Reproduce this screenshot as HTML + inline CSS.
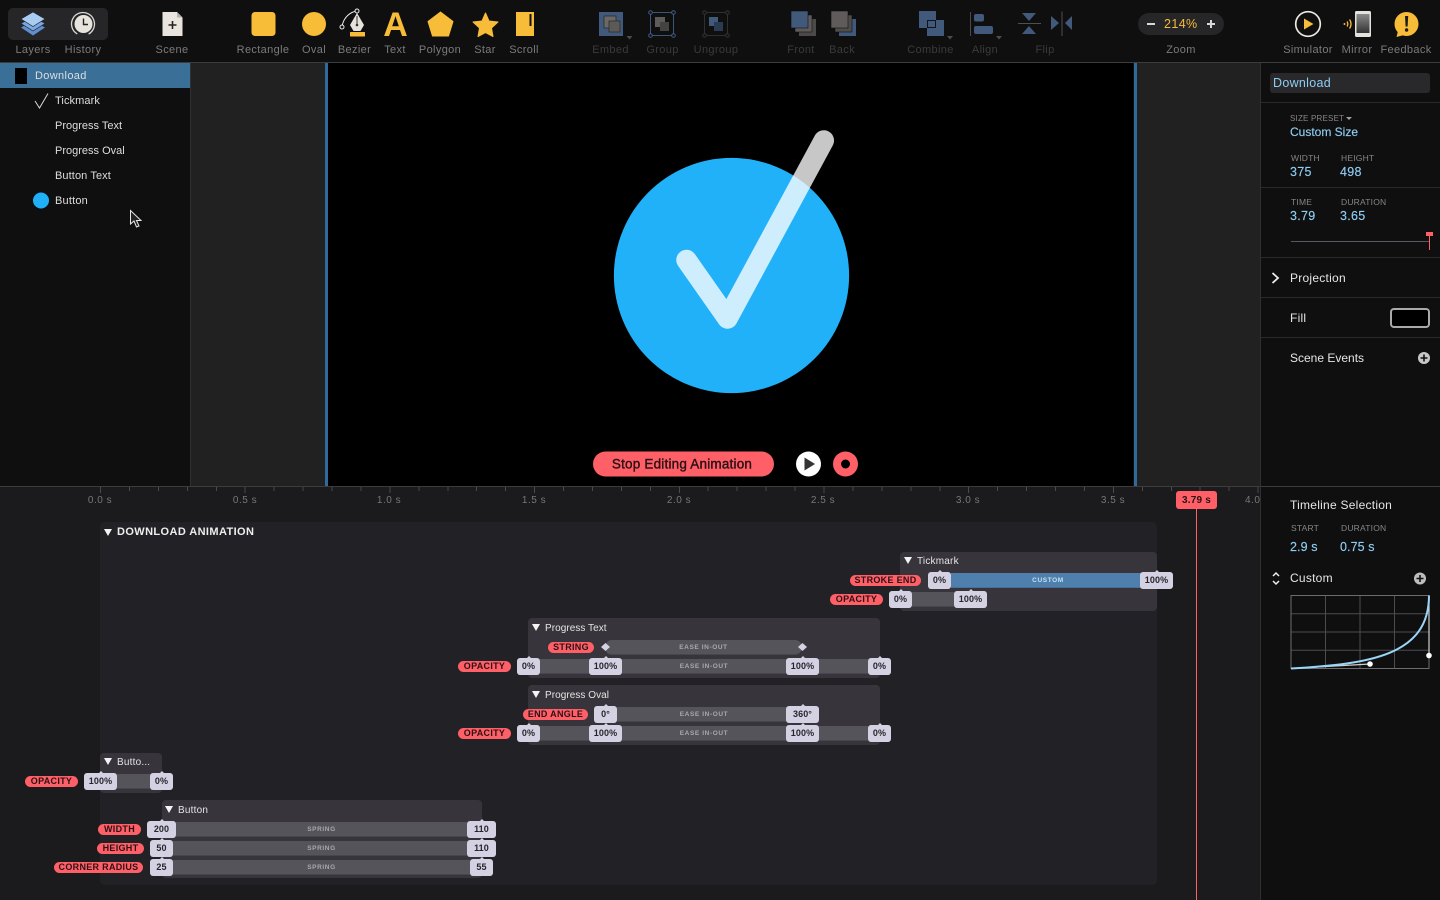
<!DOCTYPE html>
<html><head><meta charset="utf-8"><title>Animation Editor</title>
<style>
*{box-sizing:border-box}
html,body{margin:0;padding:0;width:1440px;height:900px;overflow:hidden;background:#0f0f10;font-family:"Liberation Sans",sans-serif}
.a{position:absolute}
.t{position:absolute;white-space:nowrap;line-height:14px;height:14px}
.tb{color:#7b7b7d;font-size:11px;top:43px;letter-spacing:.35px;transform:translateX(-50%)}
.tb.d{color:#3b3b3c}
.ly{color:#dedede;font-size:11px;letter-spacing:0}
.cap{color:#868688;font-size:8.5px;letter-spacing:.2px}
.val{color:#8fcdf2;font-size:12.5px;letter-spacing:.3px;-webkit-text-stroke:.15px #8fcdf2}
.wh{color:#e6e6e6;font-size:12px;letter-spacing:.25px}
.tk{color:#77777a;font-size:10px;top:494px;letter-spacing:.5px;transform:translateX(-50%)}
.g{position:absolute;background:#37353b;border-radius:4px}
.gt{position:absolute;color:#e4e4e4;font-size:10px;line-height:14px;letter-spacing:.05px;white-space:nowrap;margin-top:2px}
.tri{position:absolute;width:0;height:0;border-left:4px solid transparent;border-right:4px solid transparent;border-top:7px solid #f4f4f4}
.b{position:absolute;height:15px;background:#55545b;border-bottom:1px solid #47464d;color:#a9a8ae;font-size:6.5px;font-weight:bold;letter-spacing:.6px;text-align:center;line-height:15px}
.c{position:absolute;height:17px;background:#d4d1e2;color:#26252c;border-radius:3px;font-size:9px;font-weight:bold;text-align:center;line-height:17px;letter-spacing:.1px}
.c:before{content:"";position:absolute;left:50%;top:-2px;margin-left:-2px;border-left:2px solid transparent;border-right:2px solid transparent;border-bottom:2px solid #d4d1e2}
.l{position:absolute;height:11px;background:#ff5f66;color:#2b1116;border-radius:6px;font-size:9px;font-weight:bold;text-align:center;line-height:11px;letter-spacing:.3px;white-space:nowrap}
svg{position:absolute;overflow:visible}
</style></head><body>

<!-- toolbar -->
<div class="a" style="left:0;top:0;width:1440px;height:62px;background:#0f0f10"></div>
<div class="a" style="left:0;top:62px;width:1440px;height:1px;background:#3c3c3e"></div>
<div class="a" style="left:8px;top:8px;width:100px;height:32px;background:#262628;border-radius:5px"></div>

<svg style="left:0;top:0" width="1440" height="62" viewBox="0 0 1440 62">
 <!-- layers -->
 <path d="M33 21 L45 27.5 L33 35.5 L21 27.5Z" fill="#5f8fd0"/>
 <path d="M33 17 L45 23.5 L33 31 L21 23.5Z" fill="#7ba8e0" stroke="#262628" stroke-width=".7"/>
 <path d="M33 12 L45 19 L33 26.5 L21 19Z" fill="#a9cdf2" stroke="#262628" stroke-width=".7"/>
 <!-- history -->
 <circle cx="83" cy="24" r="11.5" fill="none" stroke="#dad6cf" stroke-width="1.3" stroke-dasharray="60 12" transform="rotate(120 83 24)"/>
 <circle cx="83.5" cy="24" r="9" fill="#e8e4dd"/>
 <path d="M83.5 18.5V24.5H88" fill="none" stroke="#222" stroke-width="1.4"/>
 <!-- scene -->
 <path d="M162.5 12H177L182.5 17.5V36H162.5Z" fill="#e9e5de"/><path d="M177 12V17.5H182.5Z" fill="#b5b1aa"/>
 <path d="M172.5 21V29M168.5 25H176.5" stroke="#222" stroke-width="1.6"/>
 <!-- rectangle -->
 <rect x="251.5" y="12" width="24" height="24" rx="3.5" fill="#f7bc38"/>
 <circle cx="314" cy="24" r="12" fill="#f7bc38"/>
 <!-- bezier -->
 <path d="M342 26 C344 17 350 12 357 11" fill="none" stroke="#eee" stroke-width="1"/>
 <circle cx="342" cy="27" r="2" fill="#111" stroke="#eee" stroke-width="1"/>
 <circle cx="357" cy="11" r="2" fill="#111" stroke="#eee" stroke-width="1"/>
 <path d="M357 13 L364 25 L360.5 31 H353.5 L350 25Z" fill="#e7e3dc"/>
 <path d="M357 16V25" stroke="#333" stroke-width="1"/><circle cx="357" cy="25" r="1.3" fill="#333"/>
 <rect x="350" y="32" width="15" height="4.5" rx=".5" fill="#f7bc38"/>
 <text x="395.5" y="36" text-anchor="middle" font-family="Liberation Sans" font-weight="bold" font-size="34" fill="#f7bc38">A</text>
 <path d="M440.5 12 L453 21.5 L448.5 36 H432.5 L428 21.5Z" fill="#f7bc38" stroke="#f7bc38" stroke-linejoin="round"/>
 <path d="M485.5 13 L489 21 L498 22 L491.5 28 L493 36.5 L485.5 32.5 L478 36.5 L479.5 28 L473 22 L482 21Z" fill="#f7bc38" stroke="#f7bc38" stroke-linejoin="round"/>
 <rect x="516" y="12" width="18" height="24" fill="#f7bc38"/><rect x="529.5" y="14" width="2" height="12" fill="#111"/>

 <!-- embed -->
 <rect x="599" y="12" width="24" height="24" fill="#41597b"/>
 <rect x="604" y="16" width="12" height="12" fill="#6b6867" stroke="#2c2c2c" stroke-width=".8"/>
 <rect x="609" y="21" width="11" height="11" fill="#5c5a59" stroke="#2c2c2c" stroke-width=".8"/>
 <path d="M626.5 36h6l-3 3.5z" fill="#4d4d4d"/>
 <!-- group -->
 <rect x="650.5" y="12.5" width="23" height="23" fill="none" stroke="#3c5678"/>
 <g fill="#0f0f10" stroke="#3f5d85"><circle cx="650.5" cy="12.5" r="1.8"/><circle cx="673.5" cy="12.5" r="1.8"/><circle cx="650.5" cy="35.5" r="1.8"/><circle cx="673.5" cy="35.5" r="1.8"/></g>
 <rect x="655" y="17" width="10" height="10" fill="#5e5b5a"/><rect x="660" y="22" width="9" height="9" fill="#454342"/>
 <!-- ungroup -->
 <rect x="704.5" y="12.5" width="23" height="23" fill="none" stroke="#2f2f2f"/>
 <g fill="#0f0f10" stroke="#333"><circle cx="704.5" cy="12.5" r="1.8"/><circle cx="727.5" cy="12.5" r="1.8"/><circle cx="704.5" cy="35.5" r="1.8"/><circle cx="727.5" cy="35.5" r="1.8"/></g>
 <rect x="709" y="17" width="9" height="9" fill="#41597b"/><rect x="714" y="22" width="9" height="9" fill="#2b3b52"/>
 <!-- front -->
 <rect x="799" y="19" width="17" height="17" fill="#4c4a49"/><rect x="795" y="15" width="17" height="17" fill="#5e5b5a" stroke="#0f0f10" stroke-width=".6"/>
 <rect x="791" y="11" width="17" height="17" fill="#41597b" stroke="#0f0f10" stroke-width=".6"/>
 <!-- back -->
 <rect x="839" y="19" width="17" height="17" fill="#41597b"/><rect x="835" y="15" width="17" height="17" fill="#4f4d4c" stroke="#0f0f10" stroke-width=".6"/>
 <rect x="831" y="11" width="17" height="17" fill="#5e5b5a" stroke="#0f0f10" stroke-width=".6"/>
 <!-- combine -->
 <rect x="919" y="11" width="17" height="17" fill="#41597b"/><rect x="927" y="20" width="17" height="16" fill="#41597b"/>
 <rect x="927.5" y="20.5" width="8" height="7" fill="#41597b" stroke="#141414"/>
 <path d="M947 36h6l-3 3.5z" fill="#4d4d4d"/>
 <!-- align -->
 <path d="M970.5 12V36" stroke="#4a4a4a"/>
 <rect x="974" y="14" width="10" height="7.5" rx="2" fill="#41597b"/><rect x="974" y="26" width="19" height="8" rx="2" fill="#41597b"/>
 <path d="M996 36h6l-3 3.5z" fill="#4d4d4d"/>
 <!-- flip -->
 <path d="M1022 13H1036L1029 21Z" fill="#41597b"/><path d="M1018 23.5H1041" stroke="#4f4f4f"/><path d="M1022 34H1036L1029 26Z" fill="#41597b"/>
 <path d="M1051 16V30L1059 23Z" fill="#41597b"/><path d="M1062 11.5V36" stroke="#4f4f4f"/><path d="M1072 16V30L1065 23Z" fill="#41597b"/>

 <!-- simulator -->
 <circle cx="1308" cy="24" r="12.3" fill="none" stroke="#ece8df" stroke-width="1.7"/>
 <path d="M1304 18.5V29.5L1313.5 24Z" fill="#f7bc38"/>
 <!-- mirror -->
 <defs><linearGradient id="scr" x1="0" y1="0" x2="0" y2="1"><stop offset="0" stop-color="#8a8a8a"/><stop offset="1" stop-color="#333"/></linearGradient></defs>
 <rect x="1355" y="11" width="16" height="26" rx="1.5" fill="#e4e2dc"/>
 <rect x="1356.5" y="14" width="13" height="19" fill="url(#scr)"/>
 <path d="M1349.5 19.5C1351.5 22 1351.5 26 1349.5 28.5M1347 21.5C1348 23 1348 25 1347 26.5" fill="none" stroke="#f7bc38" stroke-width="1.3"/>
 <circle cx="1344.5" cy="24" r="1" fill="#f7bc38"/>
 <!-- feedback -->
 <circle cx="1406.5" cy="24" r="12" fill="#f7bc38"/><path d="M1398 31L1396.5 37L1404 35Z" fill="#f7bc38"/>
 <path d="M1405 16H1408.2L1407.6 26.5H1405.6Z" fill="#1c1c1c"/><circle cx="1406.6" cy="30" r="1.7" fill="#1c1c1c"/>
</svg>

<div class="t tb" style="left:33px">Layers</div>
<div class="t tb" style="left:83px">History</div>
<div class="t tb" style="left:172px">Scene</div>
<div class="t tb" style="left:263px">Rectangle</div>
<div class="t tb" style="left:314px">Oval</div>
<div class="t tb" style="left:354.5px">Bezier</div>
<div class="t tb" style="left:395px">Text</div>
<div class="t tb" style="left:440px">Polygon</div>
<div class="t tb" style="left:485px">Star</div>
<div class="t tb" style="left:524px">Scroll</div>
<div class="t tb d" style="left:610.5px">Embed</div>
<div class="t tb d" style="left:662.5px">Group</div>
<div class="t tb d" style="left:716px">Ungroup</div>
<div class="t tb d" style="left:801px">Front</div>
<div class="t tb d" style="left:842px">Back</div>
<div class="t tb d" style="left:930.5px">Combine</div>
<div class="t tb d" style="left:985px">Align</div>
<div class="t tb d" style="left:1045px">Flip</div>
<div class="t tb" style="left:1181px">Zoom</div>
<div class="t tb" style="left:1308px">Simulator</div>
<div class="t tb" style="left:1357px">Mirror</div>
<div class="t tb" style="left:1406px">Feedback</div>

<div class="a" style="left:1138px;top:13px;width:86px;height:22px;border-radius:11px;background:#262628"></div>
<div class="a" style="left:1147px;top:23px;width:8px;height:2px;background:#d8d8d8"></div>
<div class="a" style="left:1207px;top:23px;width:8px;height:2px;background:#d8d8d8"></div>
<div class="a" style="left:1210px;top:20px;width:2px;height:8px;background:#d8d8d8"></div>
<div class="t" style="left:1164px;top:17px;color:#f7bc38;font-size:12.5px;letter-spacing:.4px">214%</div>

<!-- left panel -->
<div class="a" style="left:0;top:63px;width:190px;height:424px;background:#0f0f10"></div>
<div class="a" style="left:190px;top:63px;width:1px;height:424px;background:#303032"></div>
<div class="a" style="left:0;top:63px;width:190px;height:25px;background:#3a6f98"></div>
<div class="a" style="left:15px;top:68px;width:12px;height:16px;background:#000"></div>
<div class="t ly" style="left:35px;top:69px;letter-spacing:.35px">Download</div>
<div class="t ly" style="left:55px;top:94px;letter-spacing:.1px">Tickmark</div>
<div class="t ly" style="left:55px;top:119px">Progress Text</div>
<div class="t ly" style="left:55px;top:144px">Progress Oval</div>
<div class="t ly" style="left:55px;top:169px;letter-spacing:.1px">Button Text</div>
<div class="t ly" style="left:55px;top:194px;letter-spacing:.2px">Button</div>
<svg style="left:0;top:63px" width="190" height="170" viewBox="0 63 190 170">
 <path d="M35 101L39.5 108L48 93.5" fill="none" stroke="#d8d8d8" stroke-width="1"/>
 <circle cx="41" cy="200.5" r="8" fill="#1fb0f8"/>
 <path d="M130.5 210.5V224L134 221L136.5 227L139 226L136.5 220.5H141Z" fill="#222" stroke="#e8e8e8" stroke-width="1"/>
</svg>

<!-- canvas -->
<div class="a" style="left:191px;top:63px;width:1069px;height:423px;background:#212121"></div>
<div class="a" style="left:328px;top:63px;width:805px;height:423px;background:#000"></div>
<div class="a" style="left:325px;top:63px;width:3px;height:423px;background:#2f6a9a"></div>
<div class="a" style="left:1133px;top:63px;width:1px;height:423px;background:#111"></div>
<div class="a" style="left:1134px;top:63px;width:3px;height:423px;background:#2f6a9a"></div>
<svg style="left:328px;top:63px" width="805" height="423" viewBox="328 63 805 423">
 <circle cx="731.5" cy="275.5" r="117.6" fill="#20b1f8"/>
 <path d="M686.5 260L727.5 318.5L823.8 140.5" fill="none" stroke="#fff" stroke-opacity=".78" stroke-width="20.5" stroke-linecap="round" stroke-linejoin="round"/>
 <rect x="593" y="451.5" width="181" height="25" rx="12.5" fill="#ff5f66"/>
 <text x="682" y="468.5" text-anchor="middle" font-family="Liberation Sans" font-size="13.5" fill="#2b1116" letter-spacing=".2" stroke="#2b1116" stroke-width=".4">Stop Editing Animation</text>
 <circle cx="808.5" cy="464" r="12.5" fill="#fff"/><path d="M804.5 457.5V470.5L815 464Z" fill="#333"/>
 <circle cx="845.5" cy="464" r="12.5" fill="#ff5f66"/><circle cx="845.5" cy="464" r="4.5" fill="#000"/>
</svg>

<!-- timeline -->
<div class="a" style="left:0;top:486px;width:1260px;height:414px;background:#1b1b1d"></div>
<div class="a" style="left:0;top:486px;width:1440px;height:1px;background:#3c3c3e"></div>
<div class="a" style="left:100px;top:487px;width:1160px;height:4px;background:repeating-linear-gradient(90deg,#4a4a4c 0,#4a4a4c 1px,transparent 1px,transparent 28.94px)"></div>
<div class="a" style="left:100px;top:487px;width:1160px;height:6px;background:repeating-linear-gradient(90deg,#4a4a4c 0,#4a4a4c 1px,transparent 1px,transparent 144.7px)"></div>
<div class="t tk" style="left:100px">0.0 s</div>
<div class="t tk" style="left:245px">0.5 s</div>
<div class="t tk" style="left:389px">1.0 s</div>
<div class="t tk" style="left:534px">1.5 s</div>
<div class="t tk" style="left:679px">2.0 s</div>
<div class="t tk" style="left:823px">2.5 s</div>
<div class="t tk" style="left:968px">3.0 s</div>
<div class="t tk" style="left:1113px">3.5 s</div>
<div class="t" style="left:1245px;top:494px;color:#77777a;font-size:10px;letter-spacing:.5px">4.0</div>

<div class="a" style="left:100px;top:522px;width:1057px;height:363px;background:#222125;border-radius:5px"></div>
<div class="tri" style="left:104px;top:529px"></div>
<div class="t" style="left:117px;top:525px;color:#eee;font-size:11px;font-weight:bold;letter-spacing:.4px">DOWNLOAD ANIMATION</div>

<!-- Tickmark -->
<div class="g" style="left:900px;top:552px;width:257px;height:59px"></div>
<div class="tri" style="left:904px;top:557px"></div>
<div class="gt" style="left:917px;top:553px;letter-spacing:.2px">Tickmark</div>
<div class="b" style="left:951px;top:572.5px;width:194px;background:#4f7fac;border-bottom-color:#44709a;color:#c6e0f3">CUSTOM</div>
<div class="l" style="left:850px;top:574.5px;width:71px">STROKE END</div>
<div class="c" style="left:928px;top:571.5px;width:23px">0%</div>
<div class="c" style="left:1140px;top:571.5px;width:33px">100%</div>
<div class="b" style="left:912px;top:591.5px;width:42px"></div>
<div class="l" style="left:830px;top:593.5px;width:53px">OPACITY</div>
<div class="c" style="left:889px;top:590.5px;width:23px">0%</div>
<div class="c" style="left:954px;top:590.5px;width:33px">100%</div>

<!-- Progress Text -->
<div class="g" style="left:528px;top:618px;width:352px;height:60px"></div>
<div class="tri" style="left:532px;top:624px"></div>
<div class="gt" style="left:545px;top:620px">Progress Text</div>
<div class="l" style="left:548px;top:641.5px;width:46px">STRING</div>
<div class="b" style="left:605px;top:639.5px;width:197px;border-radius:7px">EASE IN-OUT</div>
<svg style="left:600px;top:642px" width="210" height="10"><path d="M5.5 1L10 5L5.5 9L1 5Z M202.5 1L207 5L202.5 9L198 5Z" fill="#d4d1e2"/></svg>
<div class="b" style="left:540px;top:658.5px;width:328px">EASE IN-OUT</div>
<div class="l" style="left:458px;top:660.5px;width:53px">OPACITY</div>
<div class="c" style="left:517px;top:657.5px;width:23px">0%</div>
<div class="c" style="left:589px;top:657.5px;width:33px">100%</div>
<div class="c" style="left:786px;top:657.5px;width:33px">100%</div>
<div class="c" style="left:868px;top:657.5px;width:23px">0%</div>

<!-- Progress Oval -->
<div class="g" style="left:528px;top:685px;width:352px;height:60px"></div>
<div class="tri" style="left:532px;top:691px"></div>
<div class="gt" style="left:545px;top:687px">Progress Oval</div>
<div class="b" style="left:617px;top:706.5px;width:174px">EASE IN-OUT</div>
<div class="l" style="left:523px;top:708.5px;width:65px">END ANGLE</div>
<div class="c" style="left:594px;top:705.5px;width:23px">0°</div>
<div class="c" style="left:786px;top:705.5px;width:33px">360°</div>
<div class="b" style="left:540px;top:725.5px;width:328px">EASE IN-OUT</div>
<div class="l" style="left:458px;top:727.5px;width:53px">OPACITY</div>
<div class="c" style="left:517px;top:724.5px;width:23px">0%</div>
<div class="c" style="left:589px;top:724.5px;width:33px">100%</div>
<div class="c" style="left:786px;top:724.5px;width:33px">100%</div>
<div class="c" style="left:868px;top:724.5px;width:23px">0%</div>

<!-- Butto... -->
<div class="g" style="left:100px;top:753px;width:62px;height:40px"></div>
<div class="tri" style="left:104px;top:758px"></div>
<div class="gt" style="left:117px;top:754px;letter-spacing:.2px">Butto...</div>
<div class="b" style="left:117px;top:773.5px;width:33px"></div>
<div class="l" style="left:25px;top:775.5px;width:53px">OPACITY</div>
<div class="c" style="left:84px;top:772.5px;width:33px">100%</div>
<div class="c" style="left:150px;top:772.5px;width:23px">0%</div>

<!-- Button -->
<div class="g" style="left:162px;top:800px;width:320px;height:78px"></div>
<div class="tri" style="left:165px;top:806px"></div>
<div class="gt" style="left:178px;top:802px;letter-spacing:.2px">Button</div>
<div class="b" style="left:176px;top:821.5px;width:291px">SPRING</div>
<div class="l" style="left:98px;top:823.5px;width:43px">WIDTH</div>
<div class="c" style="left:147px;top:820.5px;width:29px">200</div>
<div class="c" style="left:467px;top:820.5px;width:29px">110</div>
<div class="b" style="left:173px;top:840.5px;width:294px;padding-left:3px">SPRING</div>
<div class="l" style="left:97px;top:842.5px;width:47px">HEIGHT</div>
<div class="c" style="left:150px;top:839.5px;width:23px">50</div>
<div class="c" style="left:467px;top:839.5px;width:29px">110</div>
<div class="b" style="left:173px;top:859.5px;width:297px">SPRING</div>
<div class="l" style="left:54px;top:861.5px;width:89px">CORNER RADIUS</div>
<div class="c" style="left:150px;top:858.5px;width:23px">25</div>
<div class="c" style="left:470px;top:858.5px;width:23px">55</div>

<!-- playhead -->
<div class="a" style="left:1196px;top:505px;width:1px;height:395px;background:#ff5f66"></div>
<div class="a" style="left:1176px;top:491px;width:41px;height:18px;background:#ff5f66;border-radius:3px;color:#2b1116;font-size:10px;font-weight:bold;text-align:center;line-height:19px;letter-spacing:.2px">3.79 s</div>

<!-- right panel -->
<div class="a" style="left:1260px;top:63px;width:1px;height:837px;background:#303032"></div>
<div class="a" style="left:1261px;top:63px;width:179px;height:423px;background:#0f0f10"></div>
<div class="a" style="left:1261px;top:487px;width:179px;height:413px;background:#0f0f10"></div>
<div class="a" style="left:1270px;top:73px;width:160px;height:20px;background:#29292c;border-radius:3px"></div>
<div class="t" style="left:1273px;top:76px;color:#8fcdf2;font-size:12.5px;letter-spacing:.3px">Download</div>
<div class="a" style="left:1261px;top:102px;width:179px;height:1px;background:#29292c"></div>
<div class="t cap" style="left:1290px;top:112px;font-size:8px">SIZE PRESET</div>
<div class="a" style="left:1346px;top:117px;width:0;height:0;border-left:3px solid transparent;border-right:3px solid transparent;border-top:3px solid #a0a0a0"></div>
<div class="t val" style="left:1290px;top:125px;font-size:12px;letter-spacing:0">Custom Size</div>
<div class="t cap" style="left:1291px;top:151px">WIDTH</div>
<div class="t cap" style="left:1341px;top:151px">HEIGHT</div>
<div class="t val" style="left:1290px;top:165px">375</div>
<div class="t val" style="left:1340px;top:165px">498</div>
<div class="a" style="left:1261px;top:187px;width:179px;height:1px;background:#29292c"></div>
<div class="t cap" style="left:1291px;top:195px">TIME</div>
<div class="t cap" style="left:1341px;top:195px">DURATION</div>
<div class="t val" style="left:1290px;top:209px">3.79</div>
<div class="t val" style="left:1340px;top:209px">3.65</div>
<div class="a" style="left:1291px;top:241px;width:138px;height:1px;background:#5a5860"></div>
<div class="a" style="left:1429px;top:233px;width:1px;height:17px;background:#ff5f66"></div>
<div class="a" style="left:1426px;top:232px;width:7px;height:4px;background:#ff5f66"></div>
<div class="a" style="left:1261px;top:257px;width:179px;height:1px;background:#29292c"></div>
<div class="t wh" style="left:1290px;top:271px">Projection</div>
<div class="a" style="left:1261px;top:297px;width:179px;height:1px;background:#29292c"></div>
<div class="t wh" style="left:1290px;top:311px">Fill</div>
<div class="a" style="left:1390px;top:308px;width:40px;height:20px;background:#000;border:2px solid #a9a9ae;border-radius:4px"></div>
<div class="a" style="left:1261px;top:337px;width:179px;height:1px;background:#29292c"></div>
<div class="t wh" style="left:1290px;top:351px;letter-spacing:0">Scene Events</div>
<div class="a" style="left:1261px;top:486px;width:179px;height:1px;background:#3c3c3e"></div>
<div class="t wh" style="left:1290px;top:498px">Timeline Selection</div>
<div class="t cap" style="left:1291px;top:521px">START</div>
<div class="t cap" style="left:1341px;top:521px">DURATION</div>
<div class="t val" style="left:1290px;top:540px;letter-spacing:.1px">2.9 s</div>
<div class="t val" style="left:1340px;top:540px;letter-spacing:.1px">0.75 s</div>
<div class="t wh" style="left:1290px;top:571px">Custom</div>
<svg style="left:1261px;top:260px" width="179" height="420" viewBox="1261 260 179 420">
 <path d="M1272.5 273L1278 278L1272.5 283" fill="none" stroke="#eee" stroke-width="1.8"/>
 <circle cx="1424" cy="358" r="6" fill="#c9c9cc"/><path d="M1424 354.5V361.5M1420.5 358H1427.5" stroke="#111" stroke-width="1.6"/>
 <path d="M1273 576L1276 573L1279 576M1273 581L1276 584L1279 581" fill="none" stroke="#eee" stroke-width="1.5"/>
 <circle cx="1420" cy="578.5" r="6" fill="#bdbdc0"/><path d="M1420 575V582M1416.5 578.5H1423.5" stroke="#111" stroke-width="1.6"/>
 <path d="M1325.5 595.5V668.5M1360 595.5V668.5M1394.5 595.5V668.5M1291 613.7H1429M1291 632H1429M1291 650.2H1429" stroke="#4c4c50" stroke-width="1"/>
 <rect x="1291" y="595.5" width="138" height="73" fill="none" stroke="#6c6c70" stroke-width="1"/>
 <path d="M1291 668.5L1370 664M1429 595.5V655.5" stroke="#d0d0d3" stroke-width="1.2"/>
 <path d="M1291 668.5C1370 664 1429 655.5 1429 595.5" fill="none" stroke="#9ad6f7" stroke-width="2"/>
 <circle cx="1370" cy="664" r="2.8" fill="#fff"/><circle cx="1429" cy="655.5" r="2.8" fill="#fff"/>
</svg>
</body></html>
